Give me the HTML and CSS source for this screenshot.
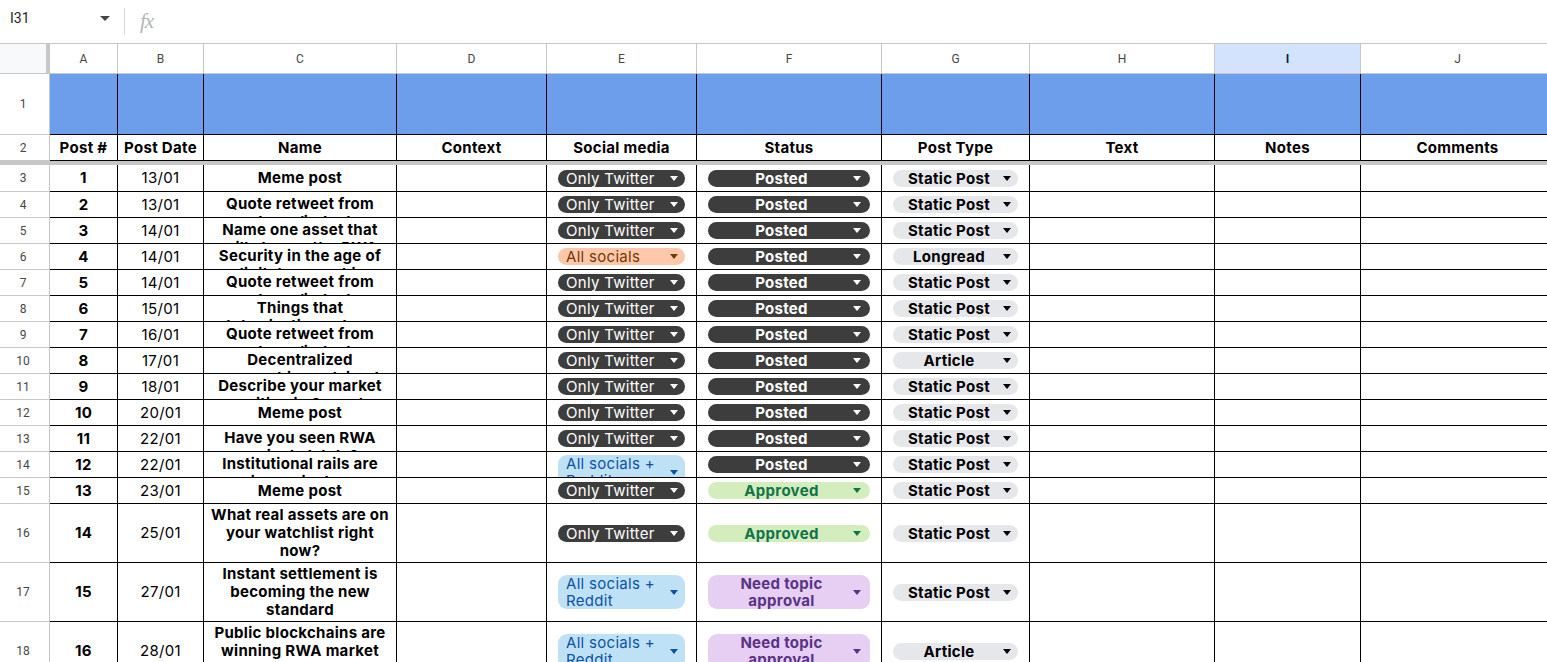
FILE: index.html
```html
<!DOCTYPE html>
<html lang="en">
<head>
    <meta charset="UTF-8">
    <title>Content plan</title>
    <link rel="stylesheet" href="styles.css">
</head>
<body>
    <div class="toolbar">
        <div class="namebox">
            <span class="cellref">I31</span>
            <span class="namebox-caret"></span>
        </div>
        <div class="divider"></div>
        <span class="fx">fx</span>
    </div>

    <div class="sheet" id="sheet">
        <div class="row colheads">
            <div class="corner"></div>
            <div class="colhead">A</div>
            <div class="colhead">B</div>
            <div class="colhead">C</div>
            <div class="colhead">D</div>
            <div class="colhead">E</div>
            <div class="colhead">F</div>
            <div class="colhead">G</div>
            <div class="colhead">H</div>
            <div class="colhead selected">I</div>
            <div class="colhead">J</div>
        </div>

        <div class="row band">
            <div class="rowhead">1</div>
            <div class="cell"></div>
            <div class="cell"></div>
            <div class="cell"></div>
            <div class="cell"></div>
            <div class="cell"></div>
            <div class="cell"></div>
            <div class="cell"></div>
            <div class="cell"></div>
            <div class="cell"></div>
            <div class="cell"></div>
        </div>

        <div class="row titles">
            <div class="rowhead">2</div>
            <div class="cell">Post #</div>
            <div class="cell">Post Date</div>
            <div class="cell">Name</div>
            <div class="cell">Context</div>
            <div class="cell">Social media</div>
            <div class="cell">Status</div>
            <div class="cell">Post Type</div>
            <div class="cell">Text</div>
            <div class="cell">Notes</div>
            <div class="cell">Comments</div>
        </div>

        <div class="freeze"></div>

        <div id="rows"></div>
    </div>

    <script>
        const socials = {
            tw: { label: 'Only Twitter', cls: 'chip-dark' },
            all: { label: 'All socials', cls: 'chip-orange' },
            reddit: { label: 'All socials +\nReddit', cls: 'chip-blue' }
        };

        const statuses = {
            posted: { label: 'Posted', cls: 'chip-dark' },
            approved: { label: 'Approved', cls: 'chip-green' },
            topic: { label: 'Need topic\napproval', cls: 'chip-purple' }
        };

        const posts = [
            [3, '1', '13/01', 'Meme post', 'tw', 'posted', 'Static Post'],
            [4, '2', '13/01', 'Quote retweet from\npartners/industry', 'tw', 'posted', 'Static Post'],
            [5, '3', '14/01', 'Name one asset that\nwill change the RWA', 'tw', 'posted', 'Static Post'],
            [6, '4', '14/01', 'Security in the age of\ndigital ownership', 'all', 'posted', 'Longread'],
            [7, '5', '14/01', 'Quote retweet from\npartners/industry', 'tw', 'posted', 'Static Post'],
            [8, '6', '15/01', 'Things that\ntokenization solves', 'tw', 'posted', 'Static Post'],
            [9, '7', '16/01', 'Quote retweet from\npartners/industry', 'tw', 'posted', 'Static Post'],
            [10, '8', '17/01', 'Decentralized\nownership explained', 'tw', 'posted', 'Article'],
            [11, '9', '18/01', 'Describe your market\nposition in 3 words', 'tw', 'posted', 'Static Post'],
            [12, '10', '20/01', 'Meme post', 'tw', 'posted', 'Static Post'],
            [13, '11', '22/01', 'Have you seen RWA\nprojects lately?', 'tw', 'posted', 'Static Post'],
            [14, '12', '22/01', 'Institutional rails are\ngoing mainstream', 'reddit', 'posted', 'Static Post'],
            [15, '13', '23/01', 'Meme post', 'tw', 'approved', 'Static Post'],
            [16, '14', '25/01', 'What real assets are on\nyour watchlist right\nnow?', 'tw', 'approved', 'Static Post', 'tall'],
            [17, '15', '27/01', 'Instant settlement is\nbecoming the new\nstandard', 'reddit', 'topic', 'Static Post', 'tall'],
            [18, '16', '28/01', 'Public blockchains are\nwinning RWA market\nshare', 'reddit', 'topic', 'Article', 'tall']
        ];

        function chip(label, cls) {
            return `<div class="chip ${cls}"><span class="chip-text">${label}</span><span class="caret"></span></div>`;
        }

        function renderRows() {
            const holder = document.getElementById('rows');
            let html = '';
            posts.forEach((p) => {
                const [num, id, date, name, social, status, type, size] = p;
                const clipped = !size && name.includes('\n') ? 'clipped' : '';
                html += `
                    <div class="row data ${size || ''} ${num === 3 ? 'first' : ''}">
                        <div class="rowhead">${num}</div>
                        <div class="cell bold">${id}</div>
                        <div class="cell">${date}</div>
                        <div class="cell bold name ${clipped}">${name}</div>
                        <div class="cell"></div>
                        <div class="cell chip-cell social">${chip(socials[social].label, socials[social].cls)}</div>
                        <div class="cell chip-cell status">${chip(statuses[status].label, statuses[status].cls)}</div>
                        <div class="cell chip-cell type">${chip(type, 'chip-gray')}</div>
                        <div class="cell"></div>
                        <div class="cell"></div>
                        <div class="cell"></div>
                    </div>`;
            });
            holder.innerHTML = html;
        }

        renderRows();
    </script>
</body>
</html>
```

FILE: styles.css
```css
* {
    box-sizing: border-box;
}

html, body {
    margin: 0;
    padding: 0;
    overflow: hidden;
    background-color: #fff;
}

body {
    width: 1547px;
    height: 662px;
    font-family: Inter, 'Noto Sans', sans-serif;
    color: #000;
}

/* formula bar */
.toolbar {
    display: flex;
    align-items: flex-start;
    height: 44px;
    border-bottom: 1px solid #c7c7c7;
}

.namebox {
    display: flex;
    align-items: center;
    width: 124px;
    height: 36px;
    padding: 0 14px 0 10px;
    justify-content: space-between;
}

.cellref {
    font-family: Roboto, 'Liberation Sans', sans-serif;
    font-size: 14px;
    color: #1f1f1f;
}

.namebox-caret {
    width: 0;
    height: 0;
    border-left: 5px solid transparent;
    border-right: 5px solid transparent;
    border-top: 5px solid #444746;
}

.divider {
    width: 1px;
    height: 27px;
    margin-top: 8px;
    background-color: #dadce0;
}

.fx {
    margin: 9px 0 0 15px;
    font-family: 'Liberation Serif', serif;
    font-style: italic;
    font-size: 21px;
    color: #b4b4b4;
    letter-spacing: -1px;
}

/* grid */
.sheet {
    width: 1560px;
}

.row {
    display: grid;
    grid-template-columns: 50px 68px 86px 193px 150px 150px 185px 148px 185px 146px 194px;
}

.cell {
    display: flex;
    align-items: safe center;
    justify-content: center;
    overflow: hidden;
    padding: 0 3px;
    border-right: 1px solid #000;
    border-bottom: 1px solid #000;
    font-size: 15px;
    line-height: 18px;
    letter-spacing: 0.3px;
    text-align: center;
    white-space: pre-line;
}

.bold {
    font-weight: 700;
}

.rowhead {
    display: flex;
    align-items: center;
    justify-content: center;
    padding-right: 3px;
    border-right: 1px solid #c7c7c7;
    border-bottom: 1px solid #c7c7c7;
    font-family: Roboto, 'Liberation Sans', sans-serif;
    font-size: 12px;
    color: #444746;
}

.colheads {
    height: 30px;
}

.corner {
    background-color: #f8f9fa;
    border-right: 4px solid #c7c7c7;
    border-bottom: 1px solid #c7c7c7;
}

.colhead {
    display: flex;
    align-items: center;
    justify-content: center;
    border-right: 1px solid #c7c7c7;
    border-bottom: 1px solid #c7c7c7;
    font-family: Roboto, 'Liberation Sans', sans-serif;
    font-size: 12px;
    color: #444746;
}

.colhead.selected {
    background-color: #d3e3fd;
    color: #041e49;
    font-weight: 700;
}

.band {
    height: 61px;
}

.band .cell {
    background-color: #6d9eeb;
}

.titles {
    height: 26px;
}

.titles .cell {
    font-weight: 700;
    white-space: nowrap;
    padding-top: 1px;
}

.freeze {
    height: 4px;
    background-color: #c7c7c7;
}

.data {
    height: 26px;
}

.data.first {
    height: 27px;
}

.data.tall {
    height: 59px;
}

.name.clipped {
    padding-top: 3px;
}

/* dropdown chips */
.chip-cell {
    padding: 3px 11px;
    justify-content: stretch;
}

.chip {
    display: flex;
    align-items: center;
    width: 100%;
    min-height: 17px;
    padding: 0 7px 0 8px;
    border-radius: 9px;
    flex-shrink: 0;
}

.chip-text {
    flex: 1;
    line-height: 17px;
    text-align: left;
    white-space: pre-line;
}

.chip .caret {
    width: 0;
    height: 0;
    margin-left: 6px;
    border-left: 4.5px solid transparent;
    border-right: 4.5px solid transparent;
    border-top: 5px solid currentColor;
}

.status .chip-text,
.type .chip-text {
    text-align: center;
    font-weight: 700;
}

.status .chip {
    padding-right: 9px;
}

.chip-dark {
    background-color: #3d3d3d;
    color: #fff;
}

.chip-orange {
    background-color: #ffc8aa;
    color: #753800;
}

.chip-blue {
    background-color: #bfe1f6;
    color: #0a53a8;
}

.chip-green {
    background-color: #d4edbc;
    color: #11734b;
}

.chip-purple {
    background-color: #e6cff2;
    color: #5a3286;
}

.chip-gray {
    background-color: #e6e7eb;
    color: #000;
}

.chip-gray .caret {
    color: #000;
}
```
